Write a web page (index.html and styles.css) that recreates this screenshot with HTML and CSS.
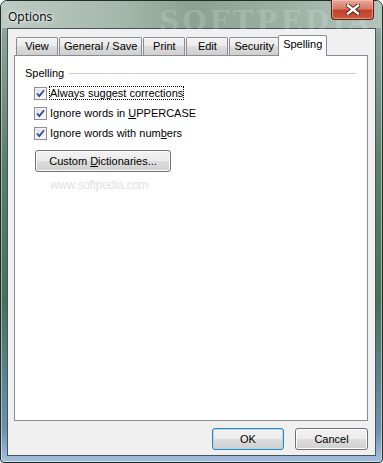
FILE: index.html
```html
<!DOCTYPE html>
<html lang="en">
<head>
  <meta charset="UTF-8" />
  <title>Options</title>
  <link rel="stylesheet" href="styles.css">
</head>
<body>

  <div class="window">

    <!-- title bar -->
    <div class="titlebar">
      <span class="title">Options</span>
      <span class="watermark">SOFTPEDIA</span>
      <div class="close">
        <svg width="14" height="11" viewBox="0 0 14 11">
          <path d="M2 1.5 L12 9.5 M12 1.5 L2 9.5" stroke="#3a1a14" stroke-width="4.2" stroke-linecap="square" />
          <path d="M2 1.5 L12 9.5 M12 1.5 L2 9.5" stroke="#ffffff" stroke-width="2.4" stroke-linecap="square" />
        </svg>
      </div>
    </div>

    <div class="client">

      <div class="tabs">
        <div class="tab">View</div>
        <div class="tab">General / Save</div>
        <div class="tab">Print</div>
        <div class="tab">Edit</div>
        <div class="tab">Security</div>
        <div class="tab active">Spelling</div>
      </div>

      <div class="panel">
        <div class="group-title">
          <span>Spelling</span>
          <span class="rule"></span>
        </div>

        <div class="checks">
          <div class="check">
            <span class="box"><svg width="9" height="9" viewBox="0 0 9 9"><path d="M1 4.5 L3.3 7 L8 1.2" fill="none" stroke="#2b4b9b" stroke-width="1.8" /></svg></span>
            <span class="label focus">Always suggest corrections</span>
          </div>
          <div class="check">
            <span class="box"><svg width="9" height="9" viewBox="0 0 9 9"><path d="M1 4.5 L3.3 7 L8 1.2" fill="none" stroke="#2b4b9b" stroke-width="1.8" /></svg></span>
            <span class="label">Ignore words in <u>U</u>PPERCASE</span>
          </div>
          <div class="check">
            <span class="box"><svg width="9" height="9" viewBox="0 0 9 9"><path d="M1 4.5 L3.3 7 L8 1.2" fill="none" stroke="#2b4b9b" stroke-width="1.8" /></svg></span>
            <span class="label">Ignore words with num<u>b</u>ers</span>
          </div>
        </div>

        <button class="btn dict">Custom <u>D</u>ictionaries...</button>
        <div class="site">www.softpedia.com</div>
      </div>

      <div class="actions">
        <button class="btn default">OK</button>
        <button class="btn">Cancel</button>
      </div>

    </div>
  </div>

</body>
</html>
```

FILE: styles.css
```css
body {
  margin: 0;
  width: 383px;
  height: 463px;
  overflow: hidden;
  font-family: 'Liberation Sans', Arial, sans-serif;
  font-size: 11px;
  color: #000;
}

.window {
  position: relative;
  box-sizing: border-box;
  width: 383px;
  height: 463px;
  border: 1px solid #1f2f28;
  border-radius: 7px 7px 4px 4px;
  padding: 0 6px 6px 6px;
  background: linear-gradient(180deg, #a4b7ad 0%, #8aa396 8%, #5b7f6b 35%, #47705a 65%, #6d91b0 93%, #a5bfe0 100%);
  box-shadow: inset 0 0 0 1px rgba(255, 255, 255, 0.45);
}

/* title bar */
.titlebar {
  position: relative;
  height: 27px;
  display: flex;
  align-items: center;
  padding-left: 7px;
  margin: 0 -6px;
  background: linear-gradient(90deg, #bccbc3 0%, #a6b9ae 30%, #8aa293 50%, #9cb1a4 75%, #b3c4bb 100%);
  border-radius: 6px 6px 0 0;
}

.title {
  font-family: 'Open Sans', 'Noto Sans', sans-serif;
  font-size: 12px;
  padding-top: 3px;
  text-shadow: 0 0 6px #fff, 0 0 3px #fff;
}

.watermark {
  position: absolute;
  left: 158px;
  top: 4px;
  font-family: 'DejaVu Serif', serif;
  font-weight: bold;
  font-size: 28px;
  letter-spacing: 3px;
  color: rgba(255, 255, 255, 0.16);
}

.close {
  position: absolute;
  top: -1px;
  right: 8px;
  width: 43px;
  height: 20px;
  box-sizing: border-box;
  border: 1px solid #5e1a10;
  border-top: none;
  border-radius: 0 0 4px 4px;
  background: linear-gradient(180deg, #e9a99a 0%, #d87a68 45%, #c2412c 55%, #c85a3c 100%);
  box-shadow: inset 0 0 0 1px rgba(255, 210, 200, 0.5);
  display: flex;
  align-items: center;
  justify-content: center;
}

/* client area */
.client {
  box-sizing: border-box;
  height: 428px;
  background: #f0f0f0;
  border: 1px solid #48545c;
  padding: 6px 7px 5px 6px;
  display: flex;
  flex-direction: column;
}

.tabs {
  display: flex;
  align-items: flex-end;
  height: 20px;
  padding-left: 2px;
}

.tab {
  position: relative;
  box-sizing: border-box;
  min-width: 42px;
  height: 18px;
  padding: 2px 4px 0;
  margin-right: 1px;
  text-align: center;
  border: 1px solid #898c95;
  border-bottom: none;
  border-radius: 2px 2px 0 0;
  background: linear-gradient(180deg, #f2f2f2 0%, #ebebeb 50%, #dddddd 50%, #cfcfcf 100%);
  box-shadow: inset 0 1px 0 #fcfcfc;
}

.tab.active {
  height: 21px;
  margin-bottom: -1px;
  margin-left: -2px;
  padding-top: 2px;
  background: #ffffff;
  box-shadow: none;
  z-index: 1;
}

.panel {
  box-sizing: border-box;
  height: 367px;
  background: #ffffff;
  border: 1px solid #898c95;
  padding: 11px 11px 0 10px;
}

.group-title {
  display: flex;
  align-items: center;
  gap: 5px;
}

.rule {
  flex: 1;
  height: 1px;
  background: #d0d0bf;
}

.checks {
  display: flex;
  flex-direction: column;
  gap: 6px;
  margin: 7px 0 0 9px;
}

.check {
  display: flex;
  align-items: center;
  height: 14px;
}

.box {
  box-sizing: border-box;
  width: 13px;
  height: 13px;
  border: 1px solid #8e8f8f;
  background: linear-gradient(135deg, #dcdcdc 0%, #f2f2f2 60%, #ffffff 100%);
  box-shadow: inset 0 0 0 1px #f4f4f4;
  display: flex;
  align-items: center;
  justify-content: center;
  margin-right: 2px;
}

.label {
  padding: 0;
  border: 1px dotted transparent;
}

.label.focus {
  border-color: #000;
}

.btn {
  font-family: inherit;
  font-size: 11px;
  color: #000;
  box-sizing: border-box;
  height: 22px;
  border: 1px solid #707070;
  border-radius: 3px;
  background: linear-gradient(180deg, #f2f2f2 0%, #ebebeb 50%, #dddddd 50%, #cfcfcf 100%);
  box-shadow: inset 0 0 0 1px #fcfcfc;
  padding: 0;
}

.dict {
  display: block;
  width: 136px;
  margin: 10px 0 0 10px;
}

.site {
  margin: 6px 0 0 25px;
  color: #e2e2e2;
  font-size: 12px;
  letter-spacing: -0.3px;
}

.actions {
  display: flex;
  justify-content: flex-end;
  gap: 11px;
  margin-top: 7px;
}

.actions .btn {
  width: 73px;
}

.btn.default {
  width: 72px;
  border-color: #3c7fb1;
  box-shadow: inset 0 0 0 1px #9fe1fb;
}
```
